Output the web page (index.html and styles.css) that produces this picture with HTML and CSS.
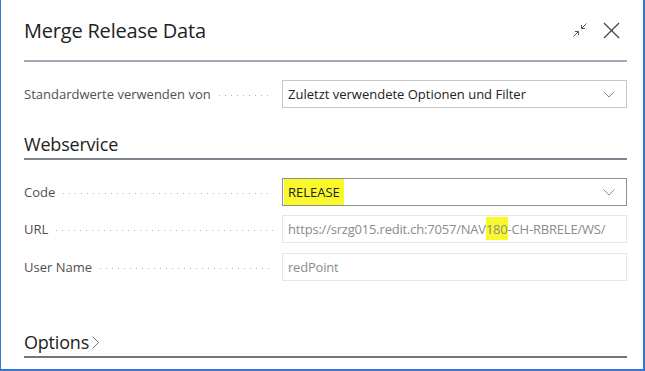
FILE: index.html
```html
<!DOCTYPE html>
<html lang="de">
<head>
<meta charset="utf-8">
<title>Merge Release Data</title>
<link rel="stylesheet" href="styles.css">
</head>
<body>
<div class="window">
  <div class="dialog">
    <header class="head">
      <h1 class="title">Merge Release Data</h1>
      <div class="actions">
        <svg class="ico-collapse" width="18" height="18" viewBox="0 0 18 18" fill="none" stroke="#555" stroke-width="1">
          <path d="M2.5 15.5 L7.5 10.5"/>
          <path d="M4 10.5 H7.5 V14"/>
          <path d="M10.5 7.5 L15.5 2.5"/>
          <path d="M10.5 4 V7.5 H14"/>
        </svg>
        <svg class="ico-close" width="17" height="17" viewBox="0 0 18 18" fill="none" stroke="#444" stroke-width="1.3">
          <path d="M1 1 L17 17 M17 1 L1 17"/>
        </svg>
      </div>
    </header>

    <div class="row first">
      <div class="label"><span class="ltext">Standardwerte verwenden von</span><span class="dots"></span></div>
      <div class="box select"><span class="val">Zuletzt verwendete Optionen und Filter</span>
        <svg class="chev" width="12" height="7" viewBox="0 0 12 7" fill="none" stroke="#8a8a8a" stroke-width="1"><path d="M0.5 0.5 L6 6 L11.5 0.5"/></svg>
      </div>
    </div>

    <h2 class="group">Webservice</h2>

    <div class="row code">
      <div class="label"><span class="ltext">Code</span><span class="dots"></span></div>
      <div class="box select dark"><span class="val hl-full">RELEASE</span>
        <svg class="chev" width="12" height="7" viewBox="0 0 12 7" fill="none" stroke="#8a8a8a" stroke-width="1"><path d="M0.5 0.5 L6 6 L11.5 0.5"/></svg>
      </div>
    </div>

    <div class="row">
      <div class="label"><span class="ltext">URL</span><span class="dots"></span></div>
      <div class="box ro"><span class="val">https://srzg015.redit.ch:7057/NAV<mark class="hl">180</mark>-CH-RBRELE/WS/</span></div>
    </div>

    <div class="row user">
      <div class="label"><span class="ltext">User Name</span><span class="dots"></span></div>
      <div class="box ro"><span class="val">redPoint</span></div>
    </div>

    <h2 class="group options">Options<svg class="chev-r" width="7" height="13" viewBox="0 0 7 13" fill="none" stroke="#777" stroke-width="1"><path d="M0.5 0.5 L6.5 6.5 L0.5 12.5"/></svg></h2>
  </div>
</div>
</body>
</html>
```
FILE: styles.css
```css
* { box-sizing: border-box; }
html, body { margin: 0; padding: 0; background: #fff; }
body { font-family: "Open Sans", "Noto Sans", sans-serif; }

.window {
  width: 645px;
  height: 371px;
  border-left: 1px solid #3a74d0;
  border-right: 2px solid #3a74d0;
  border-bottom: 2px solid #3a74d0;
  background: #fff;
  overflow: hidden;
}

.dialog {
  padding: 0 16px 0 23px;
  display: flex;
  flex-direction: column;
}

.head {
  height: 62px;
  display: flex;
  align-items: center;
  justify-content: space-between;
  border-bottom: 2px solid #a3aab5;
}

.title {
  margin: 0;
  font-size: 20px;
  font-weight: 400;
  color: #222;
  letter-spacing: -0.2px;
}

.actions {
  display: flex;
  align-items: center;
  gap: 14px;
  padding-right: 7px;
}

.row {
  display: grid;
  grid-template-columns: 258px 345px;
  align-items: center;
  height: 28px;
  margin-top: 9px;
}
.row.first { margin-top: 18px; }
.row.code { margin-top: 18px; }
.row.user { margin-top: 10px; }

.label {
  display: flex;
  align-items: center;
  padding-right: 9px;
  font-size: 13px;
  color: #505050;
}
.ltext { white-space: nowrap; }
.dots {
  flex: 1;
  height: 1px;
  margin-left: 8px;
  margin-top: 3px;
  background-image: linear-gradient(to right, #b5b5b5 1px, transparent 1px);
  background-size: 6px 1px;
  background-repeat: repeat-x;
}

.box {
  height: 28px;
  border: 1px solid #e6e6e6;
  display: flex;
  align-items: center;
  padding: 0 5px;
  font-size: 13px;
  white-space: nowrap;
  overflow: hidden;
}
.box.select {
  border-color: #c6c6c6;
  color: #222;
  justify-content: space-between;
  padding-right: 11px;
}
.box.select.dark { border-color: #8e8e8e; padding-left: 1px; }
.box.ro { color: #8c8c8c; letter-spacing: -0.2px; }

.chev { flex: none; }

.hl-full {
  background: #f8f82a;
  height: 26px;
  line-height: 26px;
  padding: 0 4px;
  color: #222;
}
.hl {
  background: #f8f82a;
  color: #8c8c8c;
  padding: 3px 0 2px;
}

.group {
  margin: 0;
  font-size: 18px;
  font-weight: 400;
  color: #222;
  border-bottom: 2px solid #7d848e;
  height: 36px;
  line-height: 24px;
  margin-top: 16px;
  padding-top: 8px;
  letter-spacing: -0.2px;
}
.group.options {
  margin-top: 43px;
  border-bottom-color: #6f7680;
  display: flex;
  align-items: center;
  padding-top: 4px;
  height: 34px;
}
.chev-r { margin-left: 3px; margin-top: 1px; }
```
